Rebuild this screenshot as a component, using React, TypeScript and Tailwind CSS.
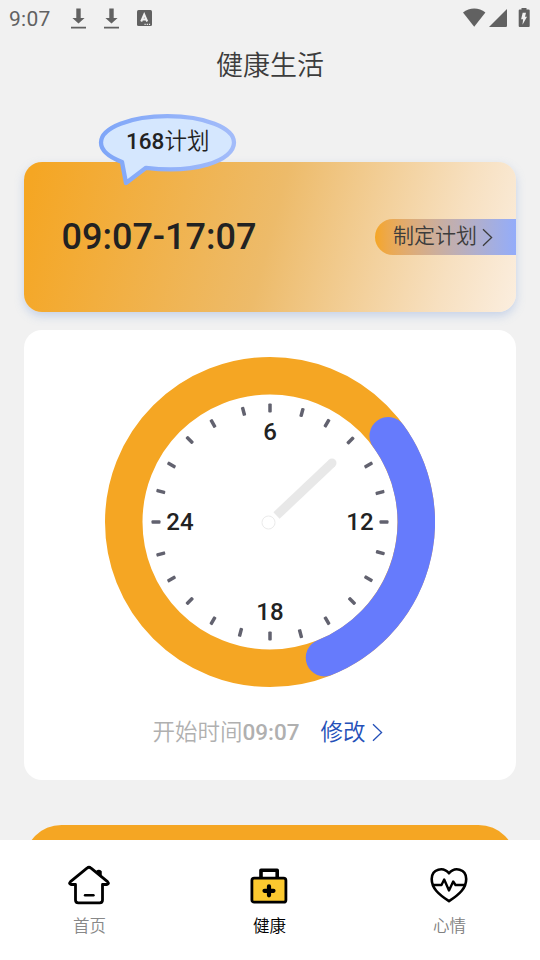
import React from 'react';

const ticks = [
  [0, -114, 0], [32, -109.5, 15], [57, -98.8, 30], [80.5, -81.5, 45], [98.5, -57, 60], [110, -29.5, 75],
  [114, 0, 90], [110.3, 30.7, 105], [98.5, 56.7, 120], [82, 79, 135], [57, 98.7, 150], [30.5, 111.7, 165],
  [0, 114, 180], [-29.5, 110.3, 195], [-57, 98.7, 210], [-80.3, 79, 225], [-98.5, 57, 240], [-109.2, 32, 255],
  [-114, 0, 270], [-109.2, -30.5, 285], [-98.5, -57, 300], [-80.3, -82, 315], [-57, -98.5, 330], [-26.5, -110.7, 345],
];

function StatusBar() {
  return (
    <div className="flex h-9 shrink-0 items-center pl-[9px] pr-[9px] text-[#616161]">
      <span className="w-[62px] pt-0.5 text-[21px] leading-[34px] tracking-[0.3px]">9:07</span>
      <Download />
      <div className="w-[18px]" />
      <Download />
      <svg className="ml-[18px]" width="15" height="16" viewBox="0 0 15 16">
        <rect width="15" height="16" rx="1.5" fill="currentColor" />
        <path d="M4.2 11.5 7.2 4.5 10.2 11.5M5.2 9.5h4" fill="none" stroke="#f1f1f1" strokeWidth="2" />
        <path d="M7.5 14.3h6" stroke="#f1f1f1" strokeWidth="1.2" strokeDasharray="1.2 1" />
      </svg>
      <svg className="ml-auto" width="68" height="20" viewBox="0 0 68 20" fill="currentColor">
        <path d="M0 4.5C6.5-.8 16-.8 22.4 4.5L11.2 18.8Z" />
        <path d="M26 19 44 1V17.8a1.2 1.2 0 0 1-1.2 1.2Z" />
        <path d="M58.500 0h5v1.500h2.200a1 1 0 0 1 1 1V18a1 1 0 0 1-1 1h-9a1 1 0 0 1-1-1V2.500a1 1 0 0 1 1-1H58.500Z" />
        <path d="M59.700 4.800h3.300l-1 4h2l-4.500 8 .6-5.500h-2Z" fill="#f1f1f1" />
      </svg>
    </div>
  );
}

function Download() {
  return (
    <svg width="15" height="21" viewBox="0 0 15 21" fill="currentColor">
      <path d="M5.300 0.500h4.400v9.500h3.900L7.500 15.600 1.400 10h3.900ZM0 18.800h15v1.800H0Z" />
    </svg>
  );
}

function Chevron({ className }: { className: string }) {
  return (
    <svg className={className} width="11" height="19" viewBox="0 0 11 19" fill="none" stroke="currentColor" strokeWidth="1.3">
      <path d="M1 1.200 9.600 9.500 1 17.800" />
    </svg>
  );
}

function Clock() {
  return (
    <svg className="block" width="330" height="330" viewBox="-165 -165 330 330">
      <circle r="146.25" fill="none" stroke="#f5a623" strokeWidth="37.5" />
      <path
        d="M118.200 -86.200A146.250 146.250 0 0 1 54.500 135.700"
        fill="none"
        stroke="#667bfc"
        strokeWidth="37.500"
        strokeLinecap="round"
      />
      {ticks.map(([x, y, angle]) => (
        <rect
          key={angle}
          x="-1.75"
          y="-4.5"
          width="3.5"
          height="9"
          rx="1"
          fill="#62626f"
          transform={`translate(${x} ${y}) rotate(${angle})`}
        />
      ))}
      <path d="M6.500 -6.500 61.500 -58.500" stroke="#e8e8e8" strokeWidth="9" />
      <circle cx="62" cy="-59" r="4.500" fill="#e8e8e8" />
      <circle cx="-1.500" cy="0.500" r="6.500" fill="#fff" stroke="#ebebeb" strokeWidth="1" />
      <g fill="#222" fontSize="24" fontWeight="500" textAnchor="middle">
        <text x="0" y="-82">6</text>
        <text x="90" y="8">12</text>
        <text x="0" y="98">18</text>
        <text x="-90" y="8">24</text>
      </g>
    </svg>
  );
}

function Tab({ label, color, children }: { label: string; color: string; children: React.ReactNode }) {
  return (
    <div className="flex w-[180px] flex-col items-center pt-6">
      <div className="mr-0.5">{children}</div>
      <span className={`mt-[9px] mr-px text-[16.500px] leading-6 font-[350] ${color}`}>{label}</span>
    </div>
  );
}

export default function App() {
  return (
    <div className="flex h-[960px] w-[540px] flex-col overflow-hidden bg-[#f1f1f1] font-['Roboto','Noto_Sans_CJK_SC',sans-serif]">
      <StatusBar />
      <h1 className="h-[126px] shrink-0 pt-2.5 text-center text-[27px] leading-10 font-[350] text-[#3c3c3c]">健康生活</h1>

      <main className="flex h-[678px] shrink-0 flex-col px-6">
        <section className="relative flex h-[150px] shrink-0 items-center justify-between rounded-[18px] bg-[linear-gradient(105deg,#f5a623_2%,#edbb6a_50%,#f7e0c0_85%,#fbeedf_100%)] pl-[37.500px] shadow-[0_4px_10px_rgba(120,155,215,0.35)]">
          <span className="text-[36px] leading-none font-medium text-[#222]">09:07-17:07</span>
          <div className="flex h-9 w-[141px] items-center rounded-l-full bg-linear-to-r from-[#f5a623] to-[#93acfa] pl-[18px] text-[#3c3c3c]">
            <span className="-mt-[3px] text-[21px] leading-9 font-[350]">制定计划</span>
            <Chevron className="ml-[5px]" />
          </div>
          <div className="absolute -top-[49px] left-[74px] h-[73px] w-[139px]">
            <svg className="absolute inset-0" width="139" height="73" viewBox="0 0 139 73">
              <defs>
                <linearGradient id="bubble" x1="0" x2="1">
                  <stop offset="0" stopColor="#7fa6f8" />
                  <stop offset="1" stopColor="#a3bcfa" />
                </linearGradient>
              </defs>
              <path
                d="M48 54.800C96 61 136 48 136 29.500 136 14.500 106 3.200 69.500 3.200S3 14.500 3 29.500C3 37 11 44 24 49L28 70Z"
                fill="#d5e7fe"
                stroke="url(#bubble)"
                strokeWidth="4.300"
                strokeLinejoin="round"
              />
            </svg>
            <div className="relative pt-3 pl-7 text-[22.500px] leading-8 text-[#222]">
              <span className="font-medium">168</span>
              <span className="font-[350]">计划</span>
            </div>
          </div>
        </section>

        <section className="mt-[18px] flex h-[450px] shrink-0 flex-col items-center rounded-[18px] bg-white pt-[27px]">
          <Clock />
          <div className="mt-[29px] mr-[5px] flex h-8 items-center text-[22.500px] leading-8">
            <span className="font-[350] text-[#b0b0b0]">开始时间</span>
            <span className="font-medium text-[#b0b0b0]">09:07</span>
            <span className="ml-[21px] font-[350] text-[#2450b8]">修改</span>
            <Chevron className="ml-1.5 text-[#2450b8]" />
          </div>
        </section>

        <div className="mt-[45px] h-[75px] shrink-0 rounded-full bg-[#f5a623]" />
      </main>

      <nav className="relative flex h-[120px] shrink-0 bg-white">
        <Tab label="首页" color="text-[#888]">
          <svg width="44" height="42" viewBox="0 0 44 42" fill="none" stroke="#000" strokeWidth="2.800" strokeLinecap="round" strokeLinejoin="round">
            <path d="M8.500 20.500H4.200Q1.200 20 3.500 17.600L20 4.200Q22 2.200 24 4.200L40.500 17.600Q42.800 20 39.800 20.500H35.500V36Q35.500 38.800 32.700 38.800H11.300Q8.500 38.800 8.500 36Z" />
            <path d="M29.500 8V7.500Q31.800 5.400 34 7.500V12.500Z" fill="#000" strokeWidth="1.500" />
            <path d="M18 31.300h8.500" strokeWidth="2.400" />
          </svg>
        </Tab>
        <Tab label="健康" color="text-black">
          <svg width="40" height="42" viewBox="0 0 40 42" fill="none" stroke="#000" strokeWidth="3">
            <path d="M12 13.500V6.200H28.200V13.500" strokeWidth="3.600" strokeLinejoin="round" />
            <rect x="2.900" y="14.200" width="34" height="24" rx="2.300" fill="#fcc92f" strokeWidth="2.800" />
            <path d="M20 22.300v9M15.500 26.800h9" strokeWidth="4.200" strokeLinecap="round" />
          </svg>
        </Tab>
        <Tab label="心情" color="text-[#808080]">
          <svg width="40" height="42" viewBox="0 0 40 42" fill="none" stroke="#000" strokeWidth="2.600" strokeLinejoin="round">
            <path d="M20 37.200C9 30 2.700 24 2.700 15 2.700 4.500 14.500 2.500 20 9.300 25.500 2.500 37.200 4.500 37.200 15 37.200 24 31 30 20 37.200Z" />
            <path d="M3 21H12.500L15.200 15.500 20 26.500 24.200 17.500 26.500 21H36.500" strokeWidth="2.400" />
          </svg>
        </Tab>
      </nav>
    </div>
  );
}
